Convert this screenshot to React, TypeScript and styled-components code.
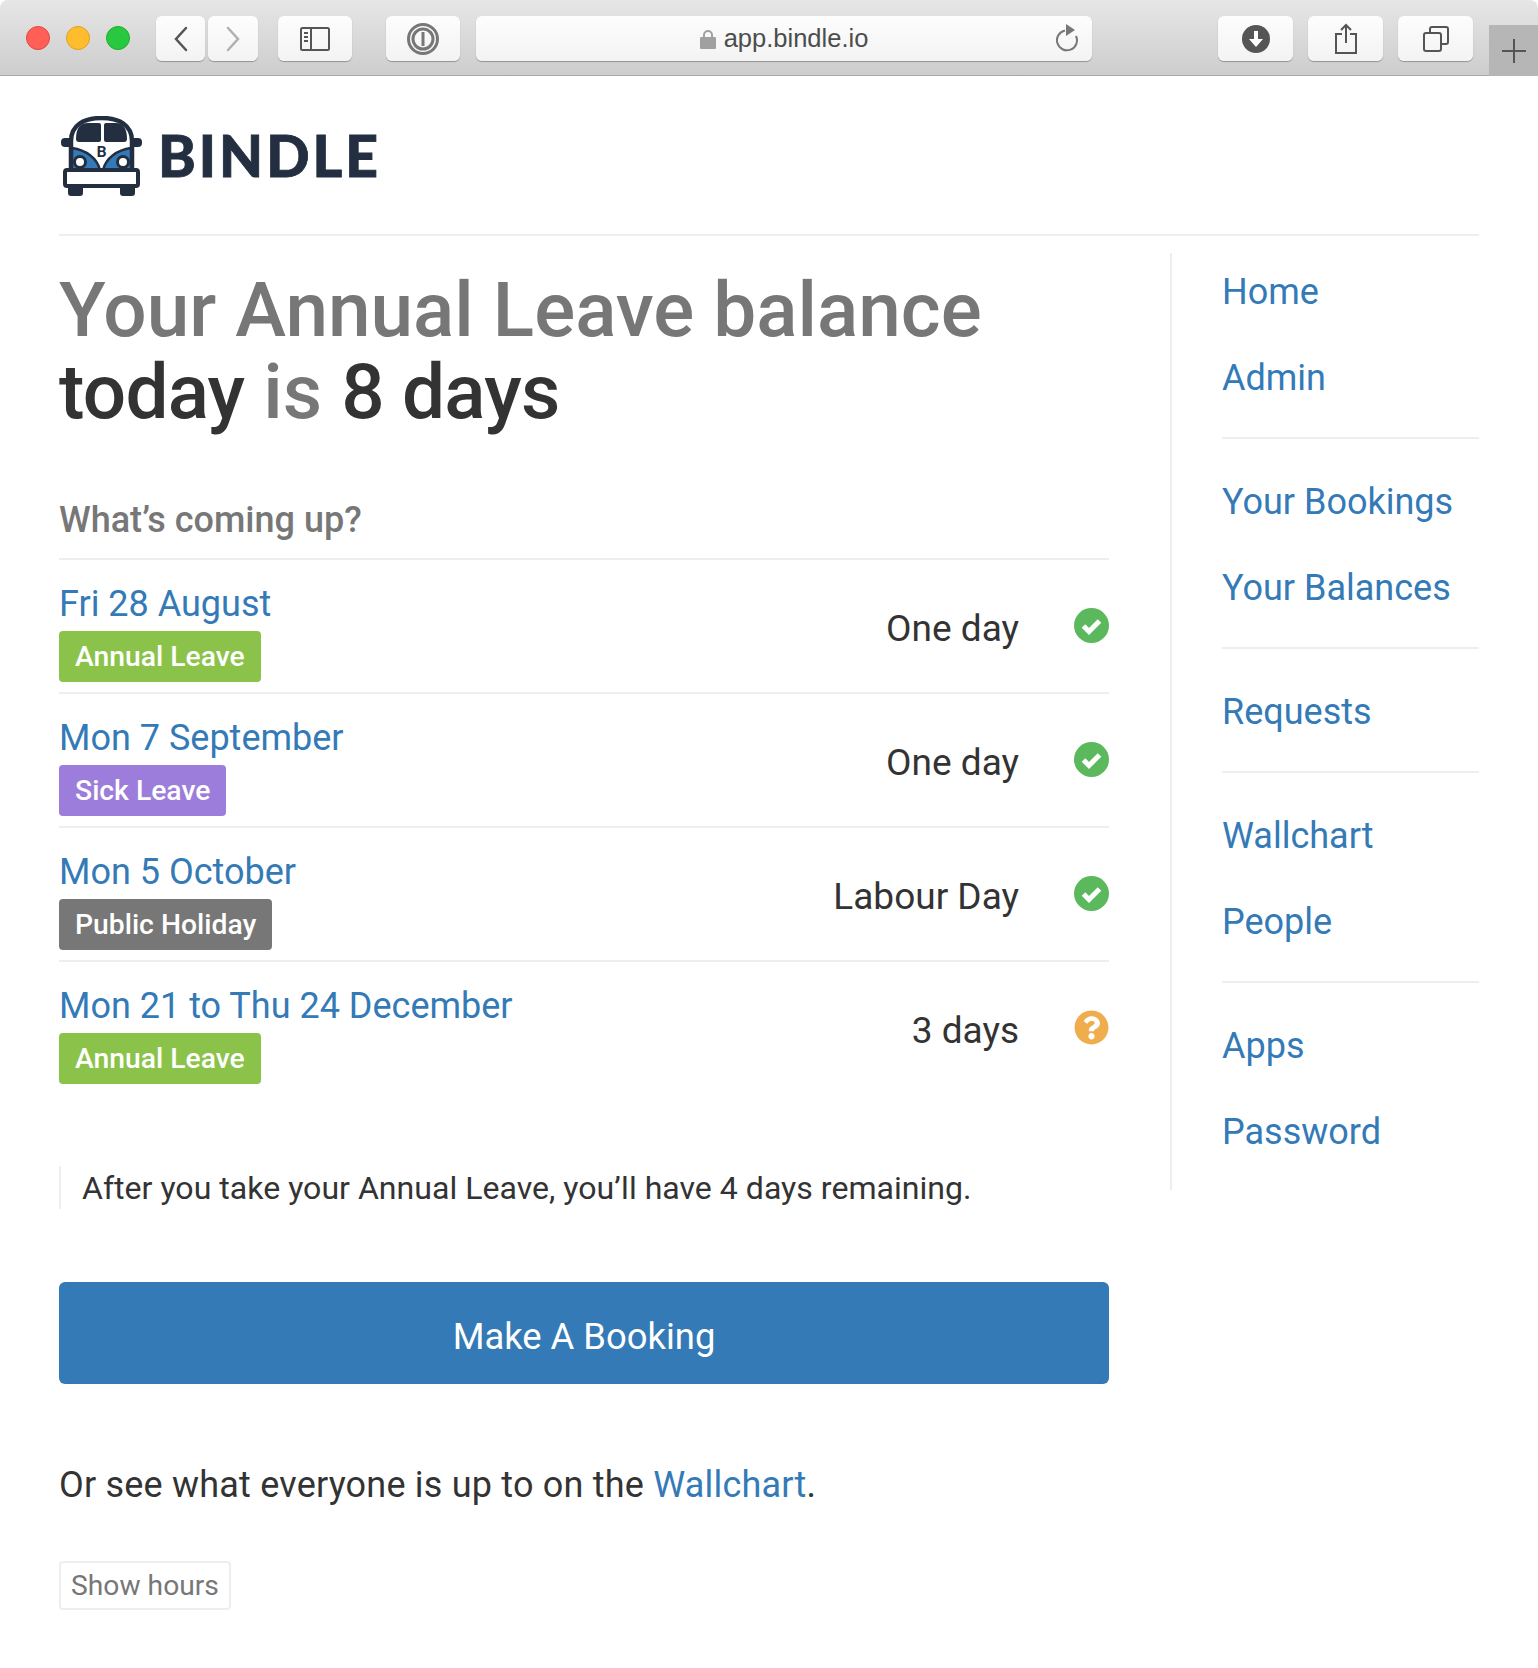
import { FaQuestionCircle } from 'react-icons/fa';
import styled, { createGlobalStyle } from 'styled-components';

const Global = createGlobalStyle`
  html, body {
    margin: 0;
    background: #fff;
    font-family: 'Roboto', 'Liberation Sans', sans-serif;
    color: #333;
  }
  * { box-sizing: border-box; }
`;

const Toolbar = styled.div`
  height: 76px;
  display: flex;
  align-items: flex-start;
  padding: 16px 0 0 26px;
  background: linear-gradient(#e6e6e6, #cdcdcd);
  border-bottom: 1px solid #a8a8a8;
  border-radius: 8px 8px 0 0;
`;

const Light = styled.span<{ $color: string; $edge: string }>`
  width: 24px;
  height: 24px;
  margin: 10px 16px 0 0;
  border-radius: 50%;
  background: ${(p) => p.$color};
  border: 1px solid ${(p) => p.$edge};
`;

const ToolButton = styled.div<{ $w: number; $ml?: number }>`
  width: ${(p) => p.$w}px;
  height: 45px;
  margin-left: ${(p) => p.$ml ?? 0}px;
  display: flex;
  align-items: center;
  justify-content: center;
  background: linear-gradient(#fdfdfd, #f3f3f3);
  border-radius: 6px;
  box-shadow: 0 1px 1px rgba(0, 0, 0, 0.3);
`;

const Address = styled(ToolButton)`
  position: relative;
  gap: 8px;
  font-family: 'Liberation Sans', sans-serif;
  font-size: 25.500px;
  color: #4c4c4c;
`;

const Reload = styled.svg`
  position: absolute;
  right: 12px;
  top: 8px;
`;

const PlusTab = styled.div`
  width: 49px;
  height: 51px;
  margin: 9px 0 0 16px;
  display: flex;
  align-items: center;
  justify-content: center;
  background: #b6b6b6;
`;

const Page = styled.div`
  padding: 0 59px;
`;

const Brand = styled.header`
  height: 160px;
  padding: 40px 0 0 1px;
  display: flex;
  align-items: flex-start;
  gap: 16px;
  border-bottom: 2px solid #eee;
`;

const Wordmark = styled.span`
  font-family: 'Lato', sans-serif;
  font-weight: 900;
  font-size: 57px;
  line-height: 78px;
  letter-spacing: 3px;
  color: #232f41;
  -webkit-text-stroke: 0.8px #232f41;
`;

const Columns = styled.div`
  display: flex;
  align-items: flex-start;
  margin-top: 17px;
`;

const Main = styled.main`
  width: 1050px;
`;

const Heading = styled.h1`
  margin: 16px 0 0;
  font-size: 76.500px;
  line-height: 82px;
  font-weight: 500;
  color: #777;
`;

const Dark = styled.span`
  color: #333;
  letter-spacing: -0.8px;
`;

const SubHeading = styled.h2`
  margin: 67px 0 18px;
  font-size: 36px;
  line-height: 40px;
  font-weight: 500;
  color: #777;
`;

const Row = styled.div`
  height: 134px;
  padding: 24px 0 10px;
  display: flex;
  align-items: center;
  border-top: 2px solid #eee;
`;

const RowLeft = styled.div`
  flex: 1;
  display: flex;
  flex-direction: column;
  align-items: flex-start;
  gap: 7px;
`;

const Link = styled.a`
  font-size: 36px;
  line-height: 40px;
  color: #337ab7;
`;

const Tag = styled.span<{ $color: string }>`
  height: 51px;
  padding: 0 16px;
  display: flex;
  align-items: center;
  border-radius: 4px;
  background: ${(p) => p.$color};
  color: #fff;
  font-size: 28.300px;
  font-weight: 500;
`;

const Duration = styled.span`
  margin: -8px 55px 0 0;
  font-size: 37px;
  line-height: 40px;
`;

const Status = styled.span<{ $color: string }>`
  display: flex;
  margin-top: -16px;
  font-size: 35px;
  color: ${(p) => p.$color};
`;

const Quote = styled.blockquote`
  margin: 72px 0 0;
  height: 43px;
  padding-left: 21px;
  display: flex;
  align-items: center;
  border-left: 2px solid #eee;
  font-size: 32.100px;
  color: #333;
`;

const BookButton = styled.button`
  display: block;
  width: 100%;
  height: 102px;
  margin-top: 73px;
  padding: 6px 0 0;
  border: 0;
  border-radius: 6px;
  background: #337ab7;
  color: #fff;
  font-family: inherit;
  font-size: 36.400px;
`;

const Note = styled.p`
  margin: 79px 0 0;
  font-size: 36px;
  line-height: 44px;
  letter-spacing: 0.2px;
`;

const GhostButton = styled.button`
  display: block;
  width: 172px;
  height: 49px;
  margin-top: 54px;
  padding: 0;
  background: #fff;
  border: 2px solid #eee;
  border-radius: 4px;
  color: #777;
  font-family: inherit;
  font-size: 28.200px;
`;

const Sidebar = styled.nav`
  width: 309px;
  height: 937px;
  margin-left: 61px;
  padding: 19px 0 0 50px;
  border-left: 2px solid #eee;
`;

const NavGroup = styled.div`
  display: flex;
  flex-direction: column;
  gap: 46px;
  & + & {
    margin-top: 39px;
    padding-top: 43px;
    border-top: 2px solid #eee;
  }
`;

const VanLogo = () => (
  <svg width="82" height="81" viewBox="0 0 82 81" role="img" aria-label="Bindle van">
    <path d="M8 70h15v7q0 3-3 3H11q-3 0-3-3zM60 70h15v7q0 3-3 3h-9q-3 0-3-3z" fill="#232f41" />
    <rect x="1" y="22" width="12" height="9" rx="4" fill="#232f41" />
    <rect x="70" y="22" width="12" height="9" rx="4" fill="#232f41" />
    <path d="M11 55V25C11 9 24 2 41.500 2S72 9 72 25v30z" fill="#fff" stroke="#232f41" strokeWidth="4.500" />
    <path d="M16 23q0-16 12-16h11q2 0 2 2v15q0 2-2 2H19q-3 0-3-3zM44 9q0-2 2-2h10q11 0 11 16 0 3-3 3H46q-2 0-2-2z" fill="#232f41" />
    <path d="M12 32c14 2 25 10 28 22H12zM71 32c-14 2-25 10-28 22h28z" fill="#337ab7" stroke="#232f41" strokeWidth="2.500" />
    <circle cx="20" cy="46" r="5.500" fill="#fff" stroke="#232f41" strokeWidth="3" />
    <circle cx="63" cy="46" r="5.500" fill="#fff" stroke="#232f41" strokeWidth="3" />
    <rect x="5" y="54" width="73" height="16" rx="2" fill="#fff" stroke="#232f41" strokeWidth="4" />
    <text x="41.500" y="41" textAnchor="middle" fontFamily="Lato" fontWeight="900" fontSize="15" fill="#232f41">B</text>
  </svg>
);

const CheckIcon = () => (
  <svg width="35" height="35" viewBox="0 0 35 35">
    <circle cx="17.500" cy="17.500" r="17.500" fill="currentColor" />
    <path d="m9.500 18 5.500 5.500L25.500 13" fill="none" stroke="#fff" strokeWidth="5" />
  </svg>
);

const rows = [
  { date: 'Fri 28 August', tag: 'Annual Leave', color: '#8bc34a', span: 'One day', ok: true },
  { date: 'Mon 7 September', tag: 'Sick Leave', color: '#9c7ddb', span: 'One day', ok: true },
  { date: 'Mon 5 October', tag: 'Public Holiday', color: '#777', span: 'Labour Day', ok: true },
  { date: 'Mon 21 to Thu 24 December', tag: 'Annual Leave', color: '#8bc34a', span: '3 days', ok: false },
];

const nav = [['Home', 'Admin'], ['Your Bookings', 'Your Balances'], ['Requests'], ['Wallchart', 'People'], ['Apps', 'Password']];

const App = () => (
  <>
    <Global />
    <Toolbar>
      <Light $color="#ff5f57" $edge="#e2463f" />
      <Light $color="#ffbd2e" $edge="#dfa023" />
      <Light $color="#28c940" $edge="#1dad2b" />
      <ToolButton $w={49} $ml={10}>
        <svg width="16" height="26" viewBox="0 0 16 26"><path d="M13 2 3 13l10 11" fill="none" stroke="#555" strokeWidth="2.500" strokeLinecap="round" /></svg>
      </ToolButton>
      <ToolButton $w={50} $ml={3}>
        <svg width="16" height="26" viewBox="0 0 16 26"><path d="m3 2 10 11L3 24" fill="none" stroke="#b0b0b0" strokeWidth="2.500" strokeLinecap="round" /></svg>
      </ToolButton>
      <ToolButton $w={74} $ml={20}>
        <svg width="30" height="24" viewBox="0 0 30 24">
          <rect x="1" y="1" width="28" height="22" rx="1.500" fill="none" stroke="#555" strokeWidth="2" />
          <path d="M11 1v22M4 6h4M4 10h4M4 14h4" stroke="#555" strokeWidth="2" />
        </svg>
      </ToolButton>
      <ToolButton $w={74} $ml={34}>
        <svg width="32" height="32" viewBox="0 0 32 32">
          <circle cx="16" cy="16" r="14.500" fill="none" stroke="#777" strokeWidth="3" />
          <circle cx="16" cy="16" r="10" fill="none" stroke="#777" strokeWidth="3" />
          <rect x="14.500" y="9" width="3" height="14" fill="#777" />
        </svg>
      </ToolButton>
      <Address $w={616} $ml={16}>
        <svg width="16" height="20" viewBox="0 0 16 20">
          <path d="M4 9V6a4 4 0 0 1 8 0v3" fill="none" stroke="#a0a0a0" strokeWidth="2" />
          <rect y="8" width="16" height="12" rx="1" fill="#a0a0a0" />
        </svg>
        app.bindle.io
        <Reload width="24" height="28" viewBox="0 0 24 28">
          <path d="M9 6.500A10 10 0 1 0 20 12" fill="none" stroke="#777" strokeWidth="2" />
          <path d="M10 0v12l9-6z" fill="#777" />
        </Reload>
      </Address>
      <ToolButton $w={75} $ml={126}>
        <svg width="28" height="28" viewBox="0 0 28 28">
          <circle cx="14" cy="14" r="14" fill="#555" />
          <path d="M12 6h4v8h5l-7 8-7-8h5z" fill="#fff" />
        </svg>
      </ToolButton>
      <ToolButton $w={75} $ml={15}>
        <svg width="24" height="32" viewBox="0 0 24 32">
          <path d="M8 11H2v19h20V11h-6M12 20V2M7 7l5-5 5 5" fill="none" stroke="#555" strokeWidth="2" />
        </svg>
      </ToolButton>
      <ToolButton $w={75} $ml={15}>
        <svg width="26" height="26" viewBox="0 0 26 26">
          <rect x="1" y="7" width="17" height="18" rx="2" fill="none" stroke="#555" strokeWidth="2" />
          <path d="M7 7V3q0-2 2-2h14q2 0 2 2v13q0 2-2 2h-5" fill="none" stroke="#555" strokeWidth="2" />
        </svg>
      </ToolButton>
      <PlusTab>
        <svg width="24" height="24" viewBox="0 0 24 24"><path d="M12 0v24M0 12h24" stroke="#555" strokeWidth="2" /></svg>
      </PlusTab>
    </Toolbar>
    <Page>
      <Brand>
        <VanLogo />
        <Wordmark>BINDLE</Wordmark>
      </Brand>
      <Columns>
        <Main>
          <Heading>
            Your Annual Leave balance
            <br />
            <Dark>today</Dark> is <Dark>8 days</Dark>
          </Heading>
          <SubHeading>What’s coming up?</SubHeading>
          {rows.map((r) => (
            <Row key={r.date}>
              <RowLeft>
                <Link>{r.date}</Link>
                <Tag $color={r.color}>{r.tag}</Tag>
              </RowLeft>
              <Duration>{r.span}</Duration>
              <Status $color={r.ok ? '#5cb85c' : '#f0ad4e'}>{r.ok ? <CheckIcon /> : <FaQuestionCircle />}</Status>
            </Row>
          ))}
          <Quote>After you take your Annual Leave, you’ll have 4 days remaining.</Quote>
          <BookButton>Make A Booking</BookButton>
          <Note>
            Or see what everyone is up to on the <Link>Wallchart</Link>.
          </Note>
          <GhostButton>Show hours</GhostButton>
        </Main>
        <Sidebar>
          {nav.map((group) => (
            <NavGroup key={group[0]}>
              {group.map((item) => (
                <Link key={item}>{item}</Link>
              ))}
            </NavGroup>
          ))}
        </Sidebar>
      </Columns>
    </Page>
  </>
);

export default App;
